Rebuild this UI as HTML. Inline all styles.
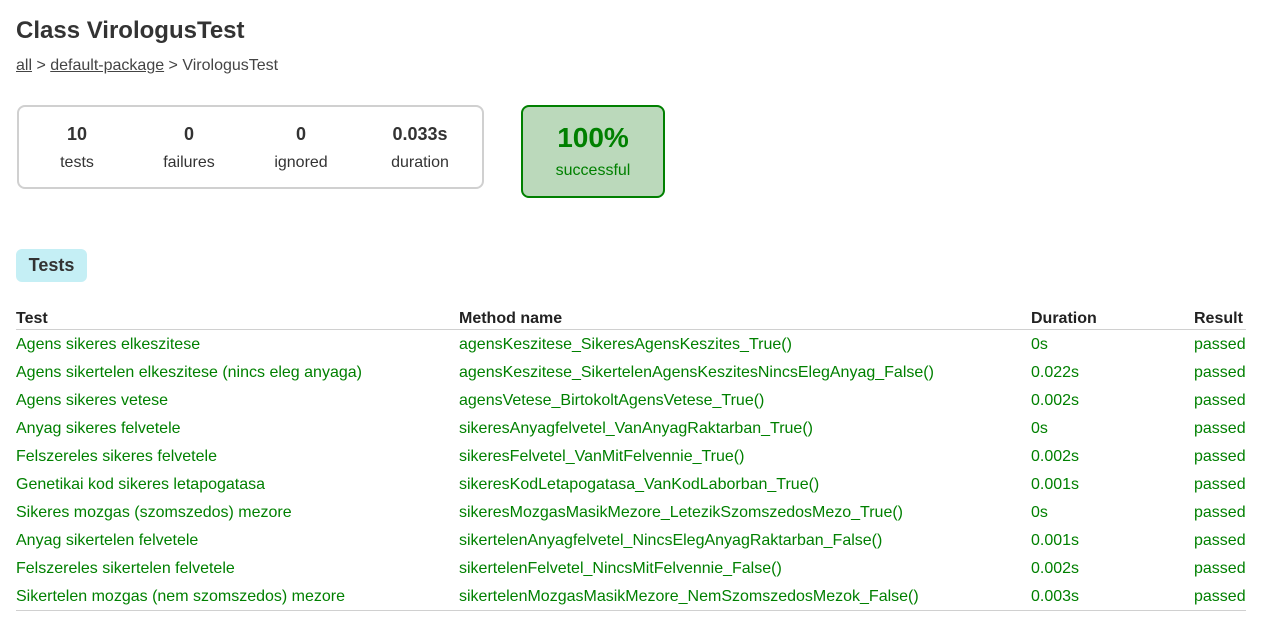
<!DOCTYPE html>
<html><head><meta charset="utf-8"><style>
body{margin:0;background:#fff;font-family:"Liberation Sans",Arial,sans-serif;color:#333;width:1267px;height:621px;overflow:hidden;position:relative}
.a{position:absolute;white-space:nowrap}
h1{position:absolute;left:16px;top:17px;margin:0;font-size:24px;font-weight:bold;color:#333}
.bc{left:16px;top:57px;font-size:16px;color:#444}
.bc u{color:#444}
.sum{left:17px;top:105px;width:463px;height:80px;border:2px solid #d0d0d0;border-radius:8px}
.c{position:absolute;text-align:center;width:120px;top:17px}
.c b{display:block;font-size:18px;margin-bottom:9px}
.c span{font-size:16px}
.ok{left:521px;top:105px;width:140px;height:89px;border:2px solid #008000;border-radius:8px;background:#bbd9bb;color:#008000;text-align:center}
.ok b{display:block;font-size:28px;margin-top:15px}
.ok span{display:block;font-size:16px;margin-top:8px}
.tab{left:16px;top:249px;width:71px;height:33px;background:#c5eff5;border-radius:6px;font-weight:bold;font-size:18px;line-height:33px;text-align:center;color:#333}
.row{position:absolute;left:16px;width:1230px;height:28px;font-size:16px;color:#008000}
.row span{position:absolute;top:0}
.hd{color:#222;font-weight:bold}
.s1{left:0}.s2{left:443px}.s3{left:1015px}.s4{left:1178px}
.ln{position:absolute;left:16px;width:1230px;height:1px;background:#d0d0d0}
</style></head><body>
<h1>Class VirologusTest</h1>
<div class="a bc"><u>all</u> &gt; <u>default-package</u> &gt; VirologusTest</div>
<div class="a sum">
<div class="c" style="left:-2px"><b>10</b><span>tests</span></div>
<div class="c" style="left:110px"><b>0</b><span>failures</span></div>
<div class="c" style="left:222px"><b>0</b><span>ignored</span></div>
<div class="c" style="left:341px"><b>0.033s</b><span>duration</span></div>
</div>
<div class="a ok"><b>100%</b><span>successful</span></div>
<div class="a tab">Tests</div>
<div class="row hd" style="top:310px"><span class="s1">Test</span><span class="s2">Method name</span><span class="s3">Duration</span><span class="s4">Result</span></div>
<div class="ln" style="top:329px"></div>
<div class="row" style="top:336px"><span class="s1">Agens sikeres elkeszitese</span><span class="s2">agensKeszitese_SikeresAgensKeszites_True()</span><span class="s3">0s</span><span class="s4">passed</span></div>
<div class="row" style="top:364px"><span class="s1">Agens sikertelen elkeszitese (nincs eleg anyaga)</span><span class="s2">agensKeszitese_SikertelenAgensKeszitesNincsElegAnyag_False()</span><span class="s3">0.022s</span><span class="s4">passed</span></div>
<div class="row" style="top:392px"><span class="s1">Agens sikeres vetese</span><span class="s2">agensVetese_BirtokoltAgensVetese_True()</span><span class="s3">0.002s</span><span class="s4">passed</span></div>
<div class="row" style="top:420px"><span class="s1">Anyag sikeres felvetele</span><span class="s2">sikeresAnyagfelvetel_VanAnyagRaktarban_True()</span><span class="s3">0s</span><span class="s4">passed</span></div>
<div class="row" style="top:448px"><span class="s1">Felszereles sikeres felvetele</span><span class="s2">sikeresFelvetel_VanMitFelvennie_True()</span><span class="s3">0.002s</span><span class="s4">passed</span></div>
<div class="row" style="top:476px"><span class="s1">Genetikai kod sikeres letapogatasa</span><span class="s2">sikeresKodLetapogatasa_VanKodLaborban_True()</span><span class="s3">0.001s</span><span class="s4">passed</span></div>
<div class="row" style="top:504px"><span class="s1">Sikeres mozgas (szomszedos) mezore</span><span class="s2">sikeresMozgasMasikMezore_LetezikSzomszedosMezo_True()</span><span class="s3">0s</span><span class="s4">passed</span></div>
<div class="row" style="top:532px"><span class="s1">Anyag sikertelen felvetele</span><span class="s2">sikertelenAnyagfelvetel_NincsElegAnyagRaktarban_False()</span><span class="s3">0.001s</span><span class="s4">passed</span></div>
<div class="row" style="top:560px"><span class="s1">Felszereles sikertelen felvetele</span><span class="s2">sikertelenFelvetel_NincsMitFelvennie_False()</span><span class="s3">0.002s</span><span class="s4">passed</span></div>
<div class="row" style="top:588px"><span class="s1">Sikertelen mozgas (nem szomszedos) mezore</span><span class="s2">sikertelenMozgasMasikMezore_NemSzomszedosMezok_False()</span><span class="s3">0.003s</span><span class="s4">passed</span></div>
<div class="ln" style="top:610px"></div>
</body></html>
